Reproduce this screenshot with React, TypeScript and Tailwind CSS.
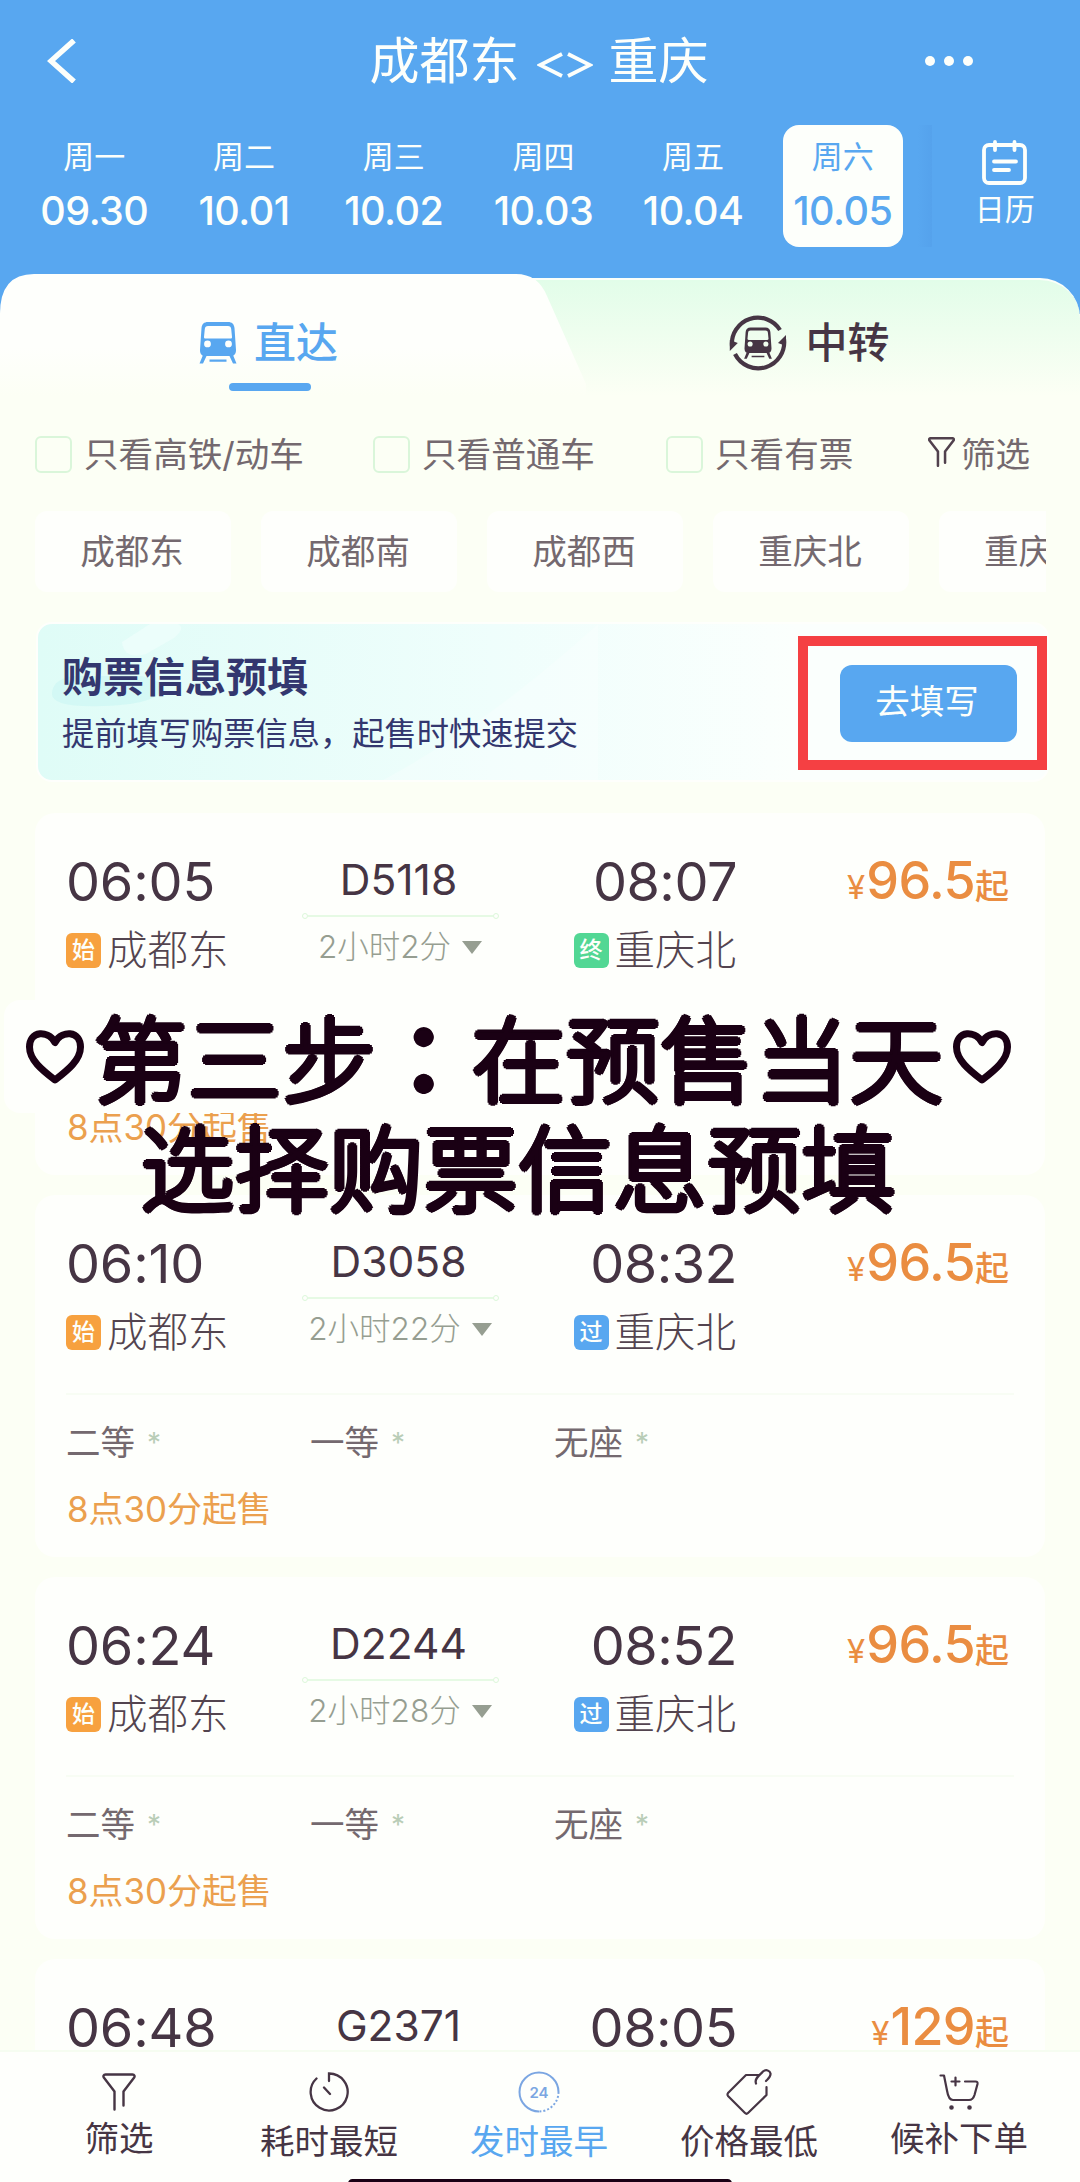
import React from "react";

const dates = [
  { week: "周一", day: "09.30" },
  { week: "周二", day: "10.01" },
  { week: "周三", day: "10.02" },
  { week: "周四", day: "10.03" },
  { week: "周五", day: "10.04" },
  { week: "周六", day: "10.05", active: true },
];

const stations = ["成都东", "成都南", "成都西", "重庆北", "重庆"];

type Train = {
  no: string;
  start: string;
  end: string;
  cost?: string;
  price: string;
  last?: "终" | "过";
};

const trains: Train[] = [
  { no: "D5118", start: "06:05", end: "08:07", cost: "2小时2分", price: "96.5", last: "终" },
  { no: "D3058", start: "06:10", end: "08:32", cost: "2小时22分", price: "96.5", last: "过" },
  { no: "D2244", start: "06:24", end: "08:52", cost: "2小时28分", price: "96.5", last: "过" },
  { no: "G2371", start: "06:48", end: "08:05", price: "129" },
];

const tagColors = {
  始: "bg-[#f7a13f]",
  终: "bg-[#52d794]",
  过: "bg-[#58a7f0]",
};

function TrainShape() {
  return (
    <>
      <path
        fillRule="evenodd"
        d="M8 0h20c4 0 6 2 6.500 6L36 28c0 4-2 6-5 6H5c-3 0-5-2-5-6L1.500 6C2 2 4 0 8 0ZM8 4c-2 0-3 1-3.200 3L4 15c0 1 .5 1.500 1.500 1.500h25c1 0 1.500-.5 1.500-1.500l-.8-8c-.2-2-1.200-3-3.200-3ZM7.500 18.500a3.400 3.400 0 1 0 0 6.800A3.400 3.400 0 0 0 7.500 18.500Zm21 0a3.400 3.400 0 1 0 0 6.800A3.400 3.400 0 0 0 28.500 18.500Z"
      />
      <path d="M3 33h4l-4 8.500H-.5ZM29 33h4l3.500 8.500H33ZM9.500 37.500h17v2.200h-17Z" />
    </>
  );
}

function Funnel({ className, strokeWidth = 2.4 }: { className: string; strokeWidth?: number }) {
  return (
    <svg
      viewBox="0 0 34 38"
      fill="none"
      stroke="currentColor"
      strokeWidth={strokeWidth}
      strokeLinecap="round"
      strokeLinejoin="round"
      className={className}
    >
      <path d="M12.500 36.500V18.500L1.800 4.500C1 3 1.500 1.500 3.500 1.500h27c2 0 2.500 1.500 1.700 3L21.500 18.500v14" />
    </svg>
  );
}

function Header() {
  return (
    <header className="flex h-[314px] flex-col bg-[#58a7f0] text-[#fdfffb]">
      <div className="flex h-[122px] items-center justify-between pl-[47px] pr-[107px]">
        <svg width="30" height="44" viewBox="0 0 30 44" fill="none" stroke="currentColor" strokeWidth="5.500">
          <path d="M27 1.500 4 22l23 20.500" />
        </svg>
        <h1 className="ml-[76px] flex items-center whitespace-pre text-[50px]">
          成都东
          <svg width="56" height="26" viewBox="0 0 56 26" fill="none" stroke="currentColor" strokeWidth="3.800" className="ml-[17px] mr-4 mt-[7px]">
            <path d="M25 2 3 13l22 11M31 2l22 11-22 11" />
          </svg>
          重庆
        </h1>
        <div className="flex gap-[9px]">
          <i className="size-[10px] rounded-full bg-current" />
          <i className="size-[10px] rounded-full bg-current" />
          <i className="size-[10px] rounded-full bg-current" />
        </div>
      </div>
      <div className="flex h-[128px] pl-[19.500px] pt-[3px]">
        {dates.map((d) => (
          <div key={d.day} className="flex w-[149.700px] justify-center">
            <div
              className={`flex h-[122px] w-[120px] flex-col items-center rounded-2xl pt-[10px] ${
                d.active ? "bg-[#fdfffb] text-[#58a7f0]" : ""
              }`}
            >
              <span className="text-[31px] leading-[44px]">{d.week}</span>
              <span className="mt-[8px] text-[39.500px] font-medium leading-[48px] tracking-[-0.5px]">{d.day}</span>
            </div>
          </div>
        ))}
        <div className="h-[122px] w-[14px] bg-gradient-to-r from-[#58a7f0] to-[#55a2ec]" />
        <div className="flex flex-1 flex-col items-center pr-0.5 pt-[15px]">
          <svg width="45" height="45" viewBox="0 0 45 45" fill="none" stroke="currentColor" strokeWidth="3.800" strokeLinecap="round">
            <rect x="2" y="5" width="41" height="38" rx="5" />
            <path d="M13 2v8M32.500 2v8M12 21.500h22M12 30h15" />
          </svg>
          <span className="mt-0.5 text-[30px] leading-[44px]">日历</span>
        </div>
      </div>
    </header>
  );
}

function Tabs() {
  return (
    <div className="relative -mt-[40px] h-[122px] shrink-0">
      <div className="absolute inset-x-0 bottom-0 top-[4px] rounded-t-[40px] border-t-2 border-[#fbfffa] bg-gradient-to-b from-[#e2fde9] to-[#fcfff5]" />
      <div className="absolute inset-0 bg-gradient-to-b from-[#fefffc] from-60% to-[#fcfff5] [clip-path:path('M0_122V40Q0_0_34_0H516Q538_0_547_22L586_110V122Z')]" />
      <div className="relative grid h-full grid-cols-2">
        <div className="flex flex-col items-center text-[#58a7f0]">
          <div className="flex h-[109px] shrink-0 items-center gap-[18px] pr-0.5 pt-[29px]">
            <svg width="36" height="42" viewBox="0 0 36 42" fill="currentColor" className="overflow-visible">
              <TrainShape />
            </svg>
            <span className="text-[42px] font-medium leading-[60px]">直达</span>
          </div>
          <div className="h-2 w-[82px] shrink-0 rounded-full bg-[#58a7f0]" />
        </div>
        <div className="flex h-[114px] items-center justify-center gap-[18px] pr-px pt-[24px] text-[#463544]">
          <svg width="58" height="58" viewBox="0 0 58 58" fill="none" stroke="currentColor" strokeWidth="4.200">
            <path d="M3 32A26 26 0 0 1 51 16" />
            <path d="M55 25A26 26 0 0 1 6 40" />
            <path d="M.8 26v11l8-8ZM57 32v-11l-8 8Z" fill="currentColor" stroke="none" />
            <g fill="currentColor" stroke="none" transform="translate(15.500 13.500) scale(.75)">
              <TrainShape />
            </g>
          </svg>
          <span className="text-[42px] font-medium leading-[60px]">中转</span>
        </div>
      </div>
    </div>
  );
}

function Check({ label, className }: { label: string; className: string }) {
  return (
    <label className={`flex items-center gap-3 ${className}`}>
      <i className="size-[37px] rounded-md border-2 border-[#daf6da]" />
      {label}
    </label>
  );
}

function Filters() {
  return (
    <section className="pl-[35px] text-[34.600px] leading-[50px] text-[#74696f]">
      <div className="flex h-[50px] items-center">
        <Check label="只看高铁/动车" className="w-[338px]" />
        <Check label="只看普通车" className="w-[293px]" />
        <Check label="只看有票" className="w-[262px]" />
        <Funnel className="mb-1 h-[30px] w-[27px] text-[#51414d]" strokeWidth={3.2} />
        <span className="ml-[6px]">筛选</span>
      </div>
      <div className="mr-[34px] mt-[32px] flex gap-[30px]">
        {stations.map((s, i) => (
          <div
            key={s}
            className={`flex h-[81px] shrink-0 items-center overflow-hidden whitespace-nowrap bg-[#fefffc] pb-[2px] ${
              i === stations.length - 1 ? "w-[107px] rounded-l-xl pl-[45px]" : "w-[196px] justify-center rounded-xl pr-0.5"
            }`}
          >
            {s}
          </div>
        ))}
      </div>
    </section>
  );
}

function Banner() {
  return (
    <section className="relative ml-[36px] mr-[31px] mt-[30px] flex h-[160px] shrink-0 items-center justify-between rounded-2xl border-2 border-[#fefffc] bg-gradient-to-r from-[#dffcf7] via-[#effefc] via-45% to-[#fbfffd] to-75% pl-[24px]">
      <svg className="absolute left-0 top-0" width="560" height="156" viewBox="0 0 560 156">
        <path d="M84 18 112 0h28q8 4-4 14l-28 16q-22 6-24-12Z" fill="#ecfefb" />
        <path d="M14 70q0-14 20-18h70l22 8q0 20-60 22-52 2-52-12Z" fill="#cdf6f3" opacity=".7" />
        <path d="M345 156Q450 100 560 0v156Z" fill="#fff" opacity=".25" />
      </svg>
      <div className="relative pt-[6px] text-[#33376f]">
        <h2 className="text-[41px] font-bold leading-[56px]">购票信息预填</h2>
        <p className="text-[32.250px] leading-[57px]">提前填写购票信息，起售时快速提交</p>
      </div>
      <div className="relative mt-[2px] flex h-[134px] w-[249px] items-center justify-end border-[10.500px] border-[#f54043] pr-[20px]">
        <button className="h-[77px] w-[177px] rounded-xl bg-[#58a7f0] pb-[3px] pr-[3px] text-[34.500px] text-[#fdfffb]">去填写</button>
      </div>
    </section>
  );
}

function StationName({ tag, name }: { tag: "始" | "终" | "过"; name: string }) {
  return (
    <div className="flex h-[50px] items-center gap-[6px] whitespace-nowrap text-[40.500px] font-light text-[#53444f]">
      <i className={`flex size-[35px] items-center justify-center rounded-md text-[23px] font-medium not-italic leading-none text-[#fdfffb] ${tagColors[tag]}`}>
        {tag}
      </i>
      <span className="pt-[2px]">{name}</span>
    </div>
  );
}

function TrainCard({ train }: { train: Train }) {
  return (
    <article className="h-[362px] shrink-0 rounded-[20px] bg-[#fefffc] px-[31px] pt-[37px]">
      <div className="flex h-[163px] border-b-2 border-[#f8fdf4]">
        <div className="w-[214px]">
          <div className="text-[54px] leading-[64px] tracking-[-0.2px] text-[#463544]">{train.start}</div>
          {train.cost && (
            <div className="mt-[11px]">
              <StationName tag="始" name="成都东" />
            </div>
          )}
        </div>
        <div className="flex w-[240px] flex-col items-center">
          <div className="pr-[3px] text-[42.500px] leading-[60px] text-[#463544]">{train.no}</div>
          {train.cost && (
            <>
              <div className="mt-[3px] flex w-[197px] items-center">
                <i className="size-[6px] rounded-full border border-[#dcf8da]" />
                <i className="h-0.5 flex-1 bg-[#e6fae4]" />
                <i className="size-[6px] rounded-full border border-[#dcf8da]" />
              </div>
              <div className="mt-[3px] flex items-center gap-[11px] whitespace-nowrap text-[31.500px] font-light leading-[50px] text-[#969e91]">
                {train.cost}
                <svg width="20" height="13" viewBox="0 0 20 13" fill="currentColor">
                  <path d="M0 0h20L10 13Z" />
                </svg>
              </div>
            </>
          )}
        </div>
        <div className="flex w-[216px] flex-col items-end">
          <div className="mr-[-1px] text-[54px] leading-[64px] tracking-[-0.5px] text-[#463544]">{train.end}</div>
          {train.last && (
            <div className="mt-[11px]">
              <StationName tag={train.last} name="重庆北" />
            </div>
          )}
        </div>
        <div className="flex h-[64px] flex-1 items-baseline justify-end pr-[5px] pt-px text-[#ea8d41]">
          <span className="mr-px text-[33px]">¥</span>
          <span className="text-[52px] font-medium leading-[60px] tracking-[-0.6px]">{train.price}</span>
          <span className="text-[34px] font-medium leading-[50px]">起</span>
        </div>
      </div>
      {train.cost && (
        <>
          <div className="mt-[23px] flex text-[34.500px] leading-[50px] text-[#74696f]">
            {["二等", "一等", "无座"].map((seat) => (
              <div key={seat} className="flex w-[244px] gap-3">
                {seat}
                <span className="text-[28px] text-[#b9cdb7]">*</span>
              </div>
            ))}
          </div>
          <div className="mt-[16px] pl-px text-[34.900px] leading-[50px] text-[#eba04e]">8点30分起售</div>
        </>
      )}
    </article>
  );
}

function Heart() {
  return (
    <svg width="58" height="54" viewBox="0 0 58 54" fill="none" stroke="currentColor" strokeWidth="7" strokeLinejoin="round">
      <path d="M29 12.500C25 5 18 3.500 14 3.800 7 4.500 3.500 10 3.500 17 3.500 30 16 40 29 50 42 40 54.500 30 54.500 17 54.500 10 51 4.500 44 3.800 40 3.500 33 5 29 12.500Z" />
    </svg>
  );
}

// light strokes thickened on every side, so the letters get round ends
const roundText =
  "font-light [text-shadow:3px_0,2.100px_2.100px,0_3px,-2.100px_2.100px,-3px_0,-2.100px_-2.100px,0_-3px,2.100px_-2.100px]";

// caption stuck on top of the list
function Caption() {
  return (
    <div className="absolute left-1 top-[1000px] w-[1036px] text-[94.500px] text-[#1a0014]">
      <div className="flex h-[113px] items-center rounded-2xl bg-[#fefffc] pl-[22px]">
        <Heart />
        <span className={`mx-[9px] pt-[3px] leading-[113px] ${roundText}`}>
          第三步<span className="font-['Noto_Sans_CJK_TC',sans-serif] font-normal">：</span>在预售当天
        </span>
        <Heart />
      </div>
      <div className={`pl-[136px] leading-[115px] ${roundText}`}>选择购票信息预填</div>
    </div>
  );
}

function BottomBar() {
  const items = [
    { label: "筛选", icon: <Funnel className="h-[38px] w-[34px]" /> },
    {
      label: "耗时最短",
      sort: true,
      icon: (
        <svg width="40" height="40" viewBox="0 0 40 40" fill="none" stroke="currentColor" strokeWidth="2.300" strokeLinecap="round">
          <path d="M20 9V1.500A18.500 18.500 0 1 1 7.500 6.500M15 15.500l6 6.500" />
        </svg>
      ),
    },
    {
      label: "发时最早",
      sort: true,
      active: true,
      icon: (
        <svg width="42" height="42" viewBox="0 0 42 42" fill="none" stroke="#7ba6e2" strokeWidth="2">
          <path d="M21 40.500A19.500 19.500 0 1 1 40.500 21" />
          <path d="M40.500 21A19.500 19.500 0 0 1 21 40.500" strokeDasharray="2 2" />
          <text x="21" y="26.500" textAnchor="middle" fontSize="15" fontWeight="600" fill="#7ba6e2" stroke="none">
            24
          </text>
        </svg>
      ),
    },
    {
      label: "价格最低",
      sort: true,
      icon: (
        <svg width="46" height="46" viewBox="0 0 46 46" fill="none" stroke="currentColor" strokeWidth="2.200" strokeLinecap="round" strokeLinejoin="round">
          <path d="M33 6H20L2 24q-1 1.500 0 3L19 44q1.500 1.500 3 0L40.500 26V18" />
          <path d="M30 14.500C28 9 34 6 37 2.500c3-2.500 7-1 7.500 2C45 8 42 10 40 12" />
        </svg>
      ),
    },
    {
      label: "候补下单",
      icon: (
        <svg width="40" height="38" viewBox="0 0 40 38" fill="none" stroke="currentColor" strokeWidth="2.200" strokeLinecap="round" strokeLinejoin="round">
          <path d="M1.500 2.500H5q1 5 3 15 1.500 9.500 6 9.500H30q4 0 5.500-5L38.500 11q.5-2.500-2-2.500H26M16.500 4.500v8M12.500 8.500h8" />
          <circle cx="12.500" cy="34.500" r="1.200" fill="currentColor" />
          <circle cx="30.500" cy="34.500" r="1.200" fill="currentColor" />
        </svg>
      ),
    },
  ];
  return (
    <nav className="relative h-[132px] shrink-0 border-t-2 border-[#f6fdf1] bg-[#fefffc]">
      <div className="flex pl-[14px]">
        {items.map((item) => (
          <div
            key={item.label}
            className={`flex w-[210px] flex-col items-center text-[34.500px] leading-[50px] ${
              item.active ? "text-[#58a7f0]" : "text-[#463544]"
            }`}
          >
            <div className="flex h-[62px] items-center pt-[17px]">{item.icon}</div>
            <span className={item.sort ? "pt-[3px]" : ""}>{item.label}</span>
          </div>
        ))}
      </div>
      <div className="absolute bottom-[-6px] left-[348px] h-[9px] w-[384px] rounded-full bg-[#1a0014]" />
    </nav>
  );
}

export default function App() {
  return (
    <div className="relative flex h-[2182px] w-[1080px] flex-col overflow-hidden bg-[#fcfff5] font-['Inter','Noto_Sans_CJK_SC',sans-serif]">
      <Header />
      <Tabs />
      <div className="h-[33px] shrink-0" />
      <Filters />
      <Banner />
      <main className="mt-[31px] flex min-h-0 flex-1 flex-col gap-5 overflow-hidden px-[35px]">
        {trains.map((t) => (
          <TrainCard key={t.no} train={t} />
        ))}
      </main>
      <Caption />
      <BottomBar />
    </div>
  );
}
